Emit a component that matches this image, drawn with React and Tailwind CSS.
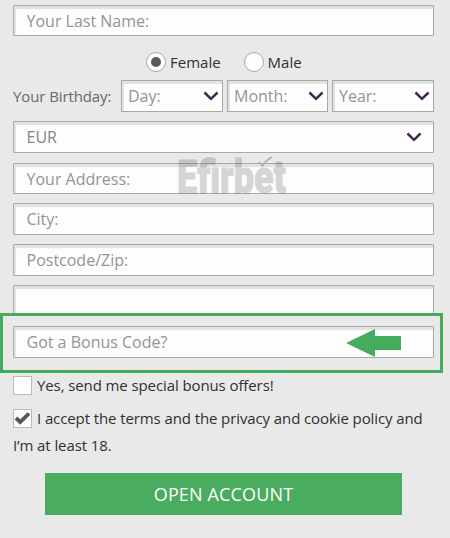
import React, { useState } from 'react';

const fieldStyle =
  'w-[421px] rounded-[1px] border border-[#a9a9a9] bg-[#fdfdfd] shadow-[inset_2px_3px_1px_#e2e2e3]';

const Chevron = () => (
  <svg className="shrink-0" width="16" height="10" viewBox="0 0 16 10" fill="none">
    <path d="M1.5 1.5 L8 7.8 L14.5 1.5" stroke="#432650" strokeWidth="2.5" />
  </svg>
);

const TextField = ({ label, className }) => (
  <input
    type="text"
    placeholder={label}
    className={`${fieldStyle} block pl-[12.5px] placeholder:text-[#949494] placeholder:opacity-100 outline-none ${className}`}
  />
);

const DateSelect = ({ label, className }) => (
  <button
    type="button"
    className={`flex h-8 items-center justify-between border border-[#a9a9a9] bg-[#fdfdfd] pr-[3px] pl-1.5 text-[#949494] shadow-[inset_2px_3px_1px_#e2e2e3] ${className}`}
  >
    <span>{label}</span>
    <Chevron />
  </button>
);

const Radio = ({ label, checked, onSelect, className }) => (
  <button type="button" onClick={onSelect} className={`flex items-center text-[15px] text-[#303030] ${className}`}>
    <span className="mr-1 flex size-5 items-center justify-center rounded-full border border-[#a8a8a8] bg-[#fdfdfd]">
      {checked && <span className="size-2.5 rounded-full bg-[#5b5b5b]" />}
    </span>
    {label}
  </button>
);

const Checkbox = ({ checked, onToggle }) => (
  <button
    type="button"
    onClick={onToggle}
    className="flex size-[19px] shrink-0 items-center justify-center border border-[#bcbcbc] bg-[#fdfdfd]"
  >
    {checked && (
      <svg width="17" height="15" viewBox="0 0 17 15" fill="none">
        <path d="M2 7 L6.2 11 L15 2.5" stroke="#555" strokeWidth="3.8" />
      </svg>
    )}
  </button>
);

const Watermark = () => (
  <svg
    className="pointer-events-none absolute top-[140px] left-[170px] overflow-visible"
    width="124"
    height="70"
    viewBox="0 0 124 70"
  >
    <g opacity="0.22">
      <text
        x="7"
        y="53"
        fill="#4a4a4a"
        stroke="#4a4a4a"
        strokeWidth="1"
        fontSize="46"
        fontWeight="900"
        fontFamily="Roboto, 'Open Sans', sans-serif"
        textLength="109"
        lengthAdjust="spacingAndGlyphs"
      >
        Efirbet
      </text>
    </g>
    <path d="M89 22 L92.5 26 Q96 20 102 17" fill="none" stroke="#b0b0b0" strokeWidth="1.5" />
  </svg>
);

const App = () => {
  const [gender, setGender] = useState('female');
  const [offers, setOffers] = useState(false);
  const [terms, setTerms] = useState(true);

  return (
    <form
      onSubmit={(e) => e.preventDefault()}
      className="relative h-[538px] w-[450px] overflow-hidden bg-[#e9e9ea] pt-[5px] font-['Open_Sans','Noto_Sans',sans-serif] text-[16px] leading-5"
    >
      <TextField label="Your Last Name:" className="ml-[13px] h-[31px]" />

      <div className="mt-4 ml-[146px] flex h-5 gap-[23px]">
        <Radio label="Female" checked={gender === 'female'} onSelect={() => setGender('female')} />
        <Radio label="Male" checked={gender === 'male'} onSelect={() => setGender('male')} />
      </div>

      <div className="mt-2 ml-[13px] flex h-8 items-center">
        <span className="w-[108px] text-[15px] tracking-[-0.1px] whitespace-nowrap text-[#686868]">Your Birthday:</span>
        <DateSelect label="Day:" className="w-[102px]" />
        <DateSelect label="Month:" className="ml-1 w-[101px]" />
        <DateSelect label="Year:" className="ml-1 w-[102px]" />
      </div>

      <button
        type="button"
        className={`${fieldStyle} mt-[9px] ml-[13px] flex h-8 items-center justify-between pr-[11px] pl-[12.5px] text-[#858585]`}
      >
        <span>EUR</span>
        <Chevron />
      </button>
      <div className="mt-[10px] ml-[13px] flex flex-col">
        <TextField label="Your Address:" className="h-[31px]" />
        <TextField label="City:" className="mt-[9px] h-8" />
        <TextField label="Postcode/Zip:" className="mt-[9px] h-8" />
        <TextField label="" className="mt-[9px] h-8" />
      </div>

      <div className="relative -mt-[4px] flex h-[60px] w-[443px] items-center border-[3px] border-[#45ac5d] bg-[#e9e9ea] pb-0.5 pl-[10px]">
        <TextField label="Got a Bonus Code?" className="h-8" />
        <svg className="absolute top-[12px] left-[343px]" width="56" height="30" viewBox="0 0 56 30">
          <path d="M0 15 L29 1 V8 H55 V22 H29 V29 Z" fill="#45ac5d" />
        </svg>
      </div>

      <div className="mt-[2px] ml-[13px] flex items-center text-[15px] tracking-[-0.1px] text-[#303030]">
        <Checkbox checked={offers} onToggle={() => setOffers(!offers)} />
        <span className="ml-[5px] whitespace-nowrap">Yes, send me special bonus offers!</span>
      </div>
      <div className="mt-[13px] ml-[13px] text-[15px] tracking-[-0.1px] text-[#303030]">
        <div className="flex items-center">
          <Checkbox checked={terms} onToggle={() => setTerms(!terms)} />
          <span className="ml-[5px] whitespace-nowrap">I accept the terms and the privacy and cookie policy and</span>
        </div>
        <p className="mt-[7px]">I’m at least 18.</p>
      </div>

      <button
        type="submit"
        className="mt-[18px] ml-[45px] flex h-[42px] w-[357px] items-center justify-center bg-[#49ac5e] text-[18px] tracking-[0.15px] text-white"
      >
        OPEN ACCOUNT
      </button>

      <Watermark />
    </form>
  );
};

export default App;
